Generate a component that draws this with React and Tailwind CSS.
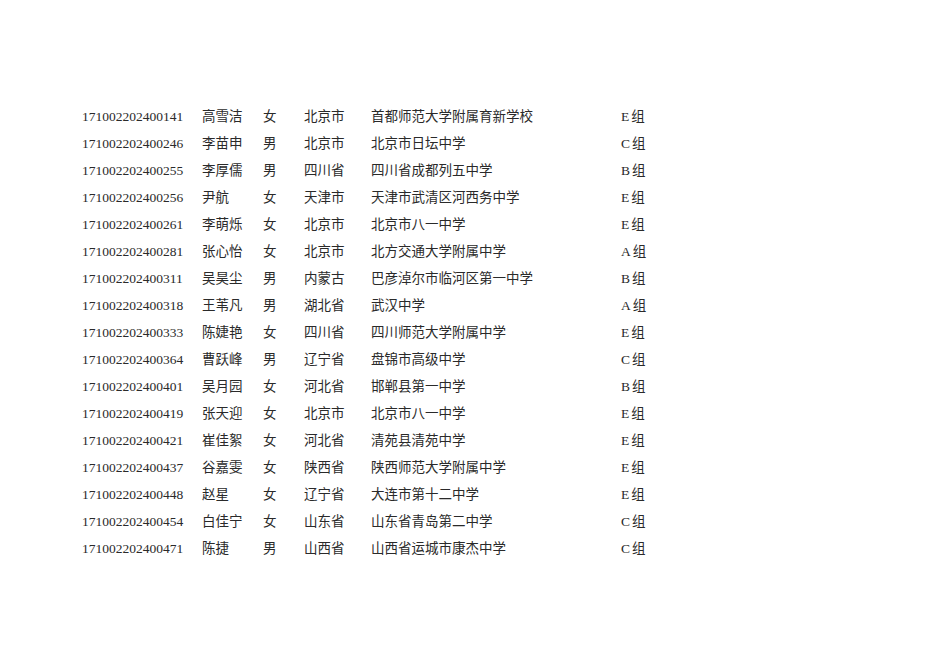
const rows = [
  ['171002202400141', '高雪洁', '女', '北京市', '首都师范大学附属育新学校', 'E'],
  ['171002202400246', '李苗申', '男', '北京市', '北京市日坛中学', 'C'],
  ['171002202400255', '李厚儒', '男', '四川省', '四川省成都列五中学', 'B'],
  ['171002202400256', '尹航', '女', '天津市', '天津市武清区河西务中学', 'E'],
  ['171002202400261', '李萌烁', '女', '北京市', '北京市八一中学', 'E'],
  ['171002202400281', '张心怡', '女', '北京市', '北方交通大学附属中学', 'A'],
  ['171002202400311', '吴昊尘', '男', '内蒙古', '巴彦淖尔市临河区第一中学', 'B'],
  ['171002202400318', '王苇凡', '男', '湖北省', '武汉中学', 'A'],
  ['171002202400333', '陈婕艳', '女', '四川省', '四川师范大学附属中学', 'E'],
  ['171002202400364', '曹跃峰', '男', '辽宁省', '盘锦市高级中学', 'C'],
  ['171002202400401', '吴月园', '女', '河北省', '邯郸县第一中学', 'B'],
  ['171002202400419', '张天迎', '女', '北京市', '北京市八一中学', 'E'],
  ['171002202400421', '崔佳絮', '女', '河北省', '清苑县清苑中学', 'E'],
  ['171002202400437', '谷嘉雯', '女', '陕西省', '陕西师范大学附属中学', 'E'],
  ['171002202400448', '赵星', '女', '辽宁省', '大连市第十二中学', 'E'],
  ['171002202400454', '白佳宁', '女', '山东省', '山东省青岛第二中学', 'C'],
  ['171002202400471', '陈捷', '男', '山西省', '山西省运城市康杰中学', 'C'],
];

export default function App() {
  return (
    <div
      className="w-[950px] h-[672px] bg-white text-[#2a2a2a] pt-[103px] pl-[82px]"
      style={{ fontFamily: '"Liberation Serif", "Noto Sans CJK SC", serif' }}
    >
      {rows.map((r) => (
        <div key={r[0]} className="flex h-[27px] items-center text-[13.5px] leading-none">
          <span className="w-[120px]">{r[0]}</span>
          <span className="w-[61px]">{r[1]}</span>
          <span className="w-[41px]">{r[2]}</span>
          <span className="w-[67px]">{r[3]}</span>
          <span className="w-[250px]">{r[4]}</span>
          <span className="flex items-center">
            {r[5]}
            <span className="ml-[2px]">组</span>
          </span>
        </div>
      ))}
    </div>
  );
}
